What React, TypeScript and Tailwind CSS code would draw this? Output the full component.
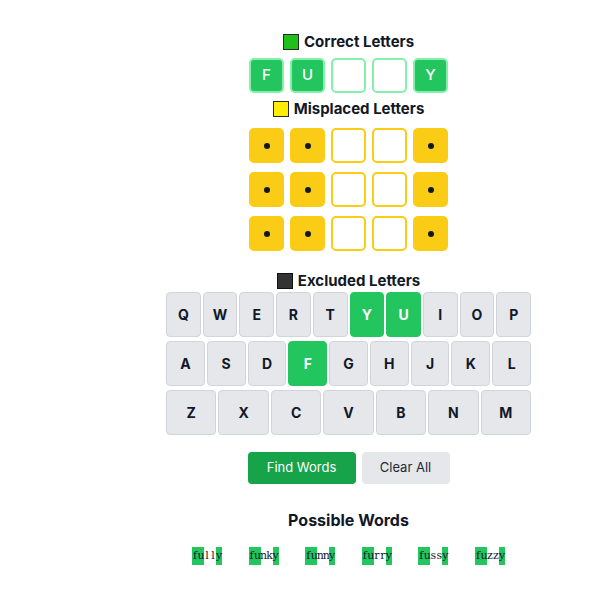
import React from "react";

const correct = ["F", "U", "", "", "Y"];
const misplacedRows = [
  [true, true, false, false, true],
  [true, true, false, false, true],
  [true, true, false, false, true],
];
const rows = [
  ["Q", "W", "E", "R", "T", "Y", "U", "I", "O", "P"],
  ["A", "S", "D", "F", "G", "H", "J", "K", "L"],
  ["Z", "X", "C", "V", "B", "N", "M"],
];
const greenKeys = new Set(["Y", "U", "F"]);
const words = ["fully", "funky", "funny", "furry", "fussy", "fuzzy"];
const hl = [true, true, false, false, true];

function Heading({ color, border, label }: { color: string; border: string; label: string }) {
  return (
    <div className="flex items-center gap-[5px] h-5">
      <span className={`block w-4 h-4 border ${color} ${border}`} />
      <span className="text-[15px] font-bold text-[#111827] leading-5">{label}</span>
    </div>
  );
}

export default function App() {
  return (
    <div className="w-full min-h-[599px] bg-white" style={{ fontFamily: "Inter, 'Noto Sans', sans-serif" }}>
      <div className="ml-[166px] w-[365px] flex flex-col items-center pt-[32px]">
        <Heading color="bg-[#1fc01a]" border="border-[#2a2a2a]" label="Correct Letters" />
        <div className="flex gap-[6px] mt-[6px]">
          {correct.map((c, i) => (
            <div
              key={i}
              className={`w-[35px] h-[35px] rounded-[5px] border-2 border-[#86efac] flex items-center justify-center text-[15px] font-medium text-white ${
                c ? "bg-[#22c55e]" : "bg-white"
              }`}
            >
              {c}
            </div>
          ))}
        </div>

        <div className="mt-[6px]">
          <Heading color="bg-[#ffee00]" border="border-[#2a2a2a]" label="Misplaced Letters" />
        </div>
        <div className="flex flex-col gap-[9px] mt-[9px]">
          {misplacedRows.map((r, ri) => (
            <div key={ri} className="flex gap-[6px]">
              {r.map((f, i) => (
                <div
                  key={i}
                  className={`w-[35px] h-[35px] rounded-[5px] border-2 border-[#facc15] flex items-center justify-center ${
                    f ? "bg-[#facc15]" : "bg-white"
                  }`}
                >
                  {f && <span className="block w-[6px] h-[6px] rounded-full bg-[#111827]" />}
                </div>
              ))}
            </div>
          ))}
        </div>

        <div className="mt-[20px]">
          <Heading color="bg-[#333333]" border="border-[#111111]" label="Excluded Letters" />
        </div>
        <div className="w-[365px] flex flex-col gap-[4px] mt-[1px]">
          {rows.map((r, ri) => (
            <div key={ri} className="flex gap-[2px]">
              {r.map((k) => {
                const g = greenKeys.has(k);
                return (
                  <div
                    key={k}
                    className={`flex-1 h-[45px] rounded-[4px] border flex items-center justify-center text-sm font-bold ${
                      g
                        ? "bg-[#22c55e] border-[#22c55e] text-white"
                        : "bg-[#e5e7eb] border-[#d1d5db] text-[#111827]"
                    }`}
                  >
                    {k}
                  </div>
                );
              })}
            </div>
          ))}
        </div>

        <div className="flex gap-[6px] mt-[17px]">
          <button className="w-[108px] h-[32px] rounded-[4px] bg-[#16a34a] text-white text-[13px]">
            Find Words
          </button>
          <button className="w-[88px] h-[32px] rounded-[4px] bg-[#e5e7eb] text-[#1f2937] text-[13px]">
            Clear All
          </button>
        </div>

        <div className="mt-[22px] text-base font-bold leading-7 text-[#111827]">Possible Words</div>

        <div className="flex gap-[26.6px] mt-[13px]">
          {words.map((w) => (
            <div
              key={w}
              className="flex text-[11px] leading-[18px] text-[#111827]"
              style={{ fontFamily: "'DejaVu Serif', serif" }}
            >
              {w.split("").map((ch, i) => (
                <span key={i} className={`w-[6px] flex justify-center overflow-visible ${hl[i] ? "bg-[#22c55e]" : ""}`}>
                  {ch}
                </span>
              ))}
            </div>
          ))}
        </div>
      </div>
    </div>
  );
}
